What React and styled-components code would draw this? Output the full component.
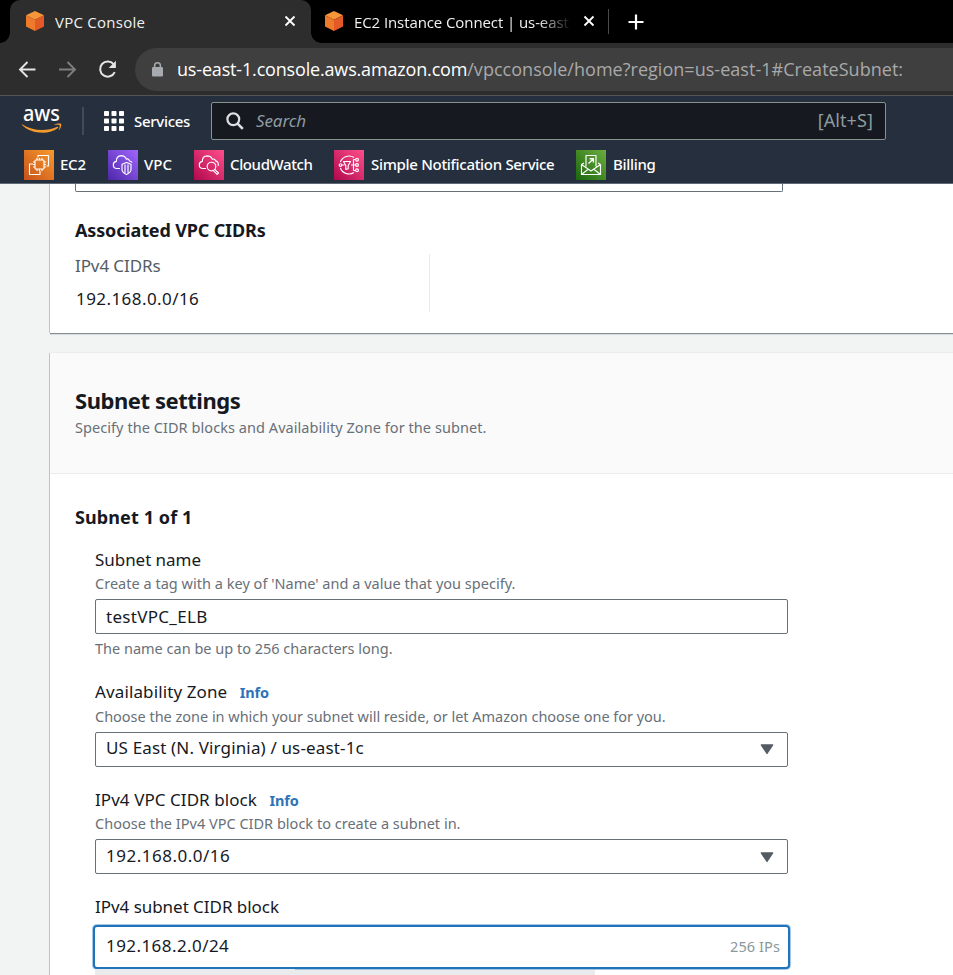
import React from 'react';
import styled, { createGlobalStyle, css } from 'styled-components';

const GlobalStyle = createGlobalStyle`
  * { box-sizing: border-box; }
  html, body { margin: 0; height: 100%; overflow: hidden; }
  body {
    font-family: "Noto Sans", "Open Sans", sans-serif;
    color: #16191f;
    background: #f2f3f3;
  }
  svg { display: block; flex: none; overflow: visible; }
`;

const Page = styled.div`
  width: 953px;
  height: 975px;
  overflow: hidden;
  display: flex;
  flex-direction: column;
`;

/* Browser chrome */
const TabStrip = styled.div`
  flex: none;
  height: 43px;
  background: #000;
  display: flex;
  padding-left: 10px;
`;

const Tab = styled.div`
  position: relative;
  height: 43px;
  width: ${(p) => (p.$active ? 301 : 299)}px;
  padding: 0 15px 1px ${(p) => (p.$active ? 15 : 13)}px;
  display: flex;
  align-items: center;
  color: #f1f1f1;
  ${(p) =>
    p.$active &&
    css`
      background: #2d2d2d;
      border-radius: 10px 10px 0 0;
      &::before,
      &::after {
        content: '';
        position: absolute;
        bottom: 0;
        width: 10px;
        height: 10px;
      }
      &::before {
        left: -10px;
        background: radial-gradient(circle at 0 0, transparent 9.5px, #2d2d2d 10px);
      }
      &::after {
        right: -10px;
        background: radial-gradient(circle at 100% 0, transparent 9.5px, #2d2d2d 10px);
      }
    `}
`;

const TabTitle = styled.span`
  flex: 1;
  margin: 2px 8px 0 10px;
  font: 400 15px/24px "Open Sans", sans-serif;
  letter-spacing: ${(p) => p.$spacing}px;
  white-space: nowrap;
  overflow: hidden;
  ${(p) =>
    p.$fade &&
    css`
      mask-image: linear-gradient(90deg, #000 184px, transparent 218px);
    `}
`;

const TabDivider = styled.div`
  width: 1px;
  height: 25px;
  margin: 9px 19px 0 -2px;
  background: #4a4a4a;
`;

const NewTab = styled.div`
  display: flex;
  align-items: center;
`;

const Toolbar = styled.div`
  flex: none;
  height: 53px;
  background: #2d2d2d;
  border-bottom: 1px solid #565453;
  display: flex;
  align-items: flex-start;
  padding: 5px 0 0 17px;
`;

const NavButton = styled.div`
  height: 41px;
  width: 40px;
  display: flex;
  align-items: center;
`;

const AddressBar = styled.div`
  flex: 1;
  height: 43px;
  margin-left: -2px;
  padding-left: 17px;
  border-radius: 22px 0 0 22px;
  background: #3f3f3f;
  display: flex;
  align-items: center;
  font: 400 18px/24px "Open Sans", sans-serif;
  white-space: nowrap;
`;

const Host = styled.span`
  margin: 0 0 2px 14px;
  color: #fff;
  letter-spacing: -0.17px;
`;

const Path = styled.span`
  margin-bottom: 2px;
  color: #a9a9a9;
  letter-spacing: 0.03px;
`;

/* AWS navigation */
const AwsHeader = styled.header`
  flex: none;
  height: 88px;
  background: #252f3e;
  border-bottom: 1px solid #5f6873;
`;

const MainNav = styled.div`
  height: 50px;
  padding: 6px 67px 0 22px;
  display: flex;
  align-items: flex-start;
`;

const NavDivider = styled.div`
  width: 2px;
  height: 28px;
  margin: 5px 20px 0 20px;
  background: #414b57;
`;

const Services = styled.div`
  width: 107px;
  height: 38px;
  display: flex;
  align-items: center;
  gap: 10px;
  color: #fff;
  font-size: 15px;
  font-weight: 500;
  letter-spacing: -0.3px;
`;

const SearchBox = styled.div`
  flex: 1;
  height: 38px;
  padding: 0 12px 0 14px;
  border: 1px solid #87938f;
  border-radius: 2px;
  background: #161920;
  display: flex;
  align-items: center;
  color: #8d9ba0;
  font-size: 17px;
  line-height: 24px;
`;

const Placeholder = styled.span`
  flex: 1;
  margin: 0 0 1px 12px;
  font-style: italic;
  letter-spacing: -0.1px;
`;

const Shortcut = styled.span`
  margin-bottom: 2px;
  font-size: 18px;
  letter-spacing: 0.1px;
`;

const Favorites = styled.div`
  display: flex;
  padding: 4px 0 0 24px;
`;

const Favorite = styled.div`
  width: ${(p) => p.$width}px;
  height: 30px;
  display: flex;
  align-items: center;
  gap: ${(p) => p.$gap}px;
  color: #fff;
  font-size: 15px;
  font-weight: 500;
  letter-spacing: ${(p) => p.$spacing}px;
  white-space: nowrap;
`;

const FavoriteName = styled.span`
  margin-bottom: 2px;
`;

const ServiceTile = styled.div`
  flex: none;
  width: 30px;
  height: 30px;
  display: flex;
  align-items: center;
  justify-content: center;
  background: linear-gradient(45deg, ${(p) => p.$from}, ${(p) => p.$to});
`;

/* Page content */
const Content = styled.main`
  flex: 1;
  min-height: 0;
  overflow: hidden;
  padding-left: 50px;
  display: flex;
  flex-direction: column;
  gap: 20px;
`;

const Card = styled.section`
  flex: none;
  height: ${(p) => p.$height}px;
  background: #fff;
  box-shadow: -1px 0 0 #bfc4c5, 0 1px 0 #858f95, 0 2px 0 #d5dadb, 0 -1px 0 #eaeded;
`;

const VpcBody = styled.div`
  padding-left: 25px;
`;

const CutOffSelect = styled.div`
  width: 708px;
  height: 8px;
  border: 1px solid #687078;
  border-top: 0;
  border-radius: 0 0 2px 2px;
`;

const SectionTitle = styled.h3`
  margin: ${(p) => p.$top}px 0 0;
  font-size: 18px;
  line-height: 24px;
  font-weight: 700;
  letter-spacing: ${(p) => p.$spacing}px;
`;

const CidrColumn = styled.div`
  width: 355px;
  height: 58px;
  margin-top: 12px;
  border-right: 1px solid #e6eaea;
  font-size: 17px;
  line-height: 22px;
`;

const CidrLabel = styled.div`
  color: #545b64;
  padding-top: 1px;
  letter-spacing: -0.1px;
`;

const CidrValue = styled.div`
  margin: 11px 0 0 1px;
  letter-spacing: 0.43px;
`;

const CardHeader = styled.div`
  height: 121px;
  padding: 32px 0 0 25px;
  background: #fafafa;
  border-bottom: 1px solid #eaeded;
`;

const CardTitle = styled.h2`
  margin: 0;
  font-size: 22px;
  line-height: 30px;
  font-weight: 700;
  letter-spacing: -0.45px;
`;

const Form = styled.div`
  padding: 31px 25px 0;
`;

const Fields = styled.div`
  width: 693px;
  margin: 19px 0 0 20px;
`;

const Field = styled.div`
  margin-top: ${(p) => p.$top}px;
`;

const LabelRow = styled.div`
  display: flex;
  align-items: baseline;
  gap: 12.5px;
  font-size: 17px;
  line-height: 24px;
  letter-spacing: ${(p) => p.$spacing}px;
`;

const InfoLink = styled.a`
  color: #2e73b8;
  font-size: 14.5px;
  font-weight: 700;
  letter-spacing: -0.15px;
`;

const Hint = styled.div`
  color: #687078;
  font-size: 14.5px;
  line-height: 20px;
  letter-spacing: ${(p) => p.$spacing}px;
  margin-top: ${(p) => p.$top}px;
  white-space: nowrap;
`;

const Control = styled.div`
  height: 35px;
  margin-top: ${(p) => p.$top}px;
  padding: 0 13px 0 10px;
  border: 1px solid #687078;
  border-radius: 2px;
  background: #fff;
  display: flex;
  align-items: center;
  justify-content: space-between;
  font-size: 17px;
  line-height: ${(p) => (p.$select ? p.$line : 34)}px;
  letter-spacing: ${(p) => p.$spacing}px;
  ${(p) =>
    p.$select &&
    css`
      align-items: flex-start;
      svg {
        margin-top: ${p.$arrow}px;
      }
    `}
`;

const FocusedControl = styled.div`
  height: 44px;
  width: 697px;
  margin: 6px -2px 0;
  padding: 0 8px 3px 11px;
  border: 2px solid #2074bb;
  border-radius: 4px;
  box-shadow: 0 0 0 1px #2074bb66;
  background: #fff;
  display: flex;
  align-items: center;
  justify-content: space-between;
  font-size: 17px;
  letter-spacing: 0.43px;
`;

const AddressCount = styled.span`
  color: #8a989b;
  font-size: 14.5px;
  letter-spacing: 0.1px;
`;

const RangeTrack = styled.div`
  width: 500px;
  height: 10px;
  display: flex;
`;

const TrackSegment = styled.div`
  width: ${(p) => p.$width}px;
  margin-top: ${(p) => p.$top}px;
  background: #e9ebed;
`;

const CubeIcon = () => (
  <svg width="20" height="22" viewBox="0 0 20 22">
    <path d="M10 1 19 5.3 10 9.8 1 5.3Z" fill="#f7953a" />
    <path d="M1 5.3 10 9.8V21L1 16.4Z" fill="#ee7a2b" />
    <path d="M19 5.3 10 9.8V21l9-4.6Z" fill="#e35a27" />
  </svg>
);

const CloseIcon = () => (
  <svg width="12" height="12" viewBox="0 0 12 12" stroke="#fff" strokeWidth="1.8">
    <path d="M1.5 1.5l9 9M10.5 1.5l-9 9" />
  </svg>
);

const ArrowIcon = ({ forward }) => (
  <svg width="20" height="20" viewBox="0 0 20 20" fill="none" strokeWidth="1.9" stroke={forward ? '#7e7e7e' : '#e4e4e4'}>
    {forward ? <path d="M2 10.5h15.5M10.5 3l7.5 7.5-7.5 7.5" /> : <path d="M18.5 10.5H3M10.5 3 3 10.5l7.5 7.5" />}
  </svg>
);

const ReloadIcon = () => (
  <svg width="22" height="22" viewBox="0 0 22 22">
    <path d="M17.7 14.1A7.6 7.6 0 1 1 16.6 6.2" fill="none" stroke="#e4e4e4" strokeWidth="2" />
    <path d="M18.9 2.7v7.2h-7.2Z" fill="#e4e4e4" />
  </svg>
);

const LockIcon = () => (
  <svg width="11" height="15" viewBox="0 0 11 15">
    <rect x="0" y="5" width="11" height="9.5" rx="1.2" fill="#a7abaf" />
    <path d="M2.6 6V3.6a2.9 2.9 0 0 1 5.8 0V6" fill="none" stroke="#a7abaf" strokeWidth="1.5" />
  </svg>
);

const AwsLogo = () => (
  <svg width="40" height="32" viewBox="0 0 40 32">
    <text x="1" y="19" fontFamily="Noto Sans, sans-serif" fontSize="22.5" fontWeight="500" fill="#fff" textLength="37" lengthAdjust="spacingAndGlyphs">
      aws
    </text>
    <path d="M0 22.3c10 6.6 24 7.8 35.2 2.5.8-.4 1.4.5.8 1.1C27.5 33 9 32.2 0 22.9Z" fill="#f79a2c" />
    <path d="M31.8 23c2.4-1.6 6.8-1.9 7.3-1.1.6.9-.4 4.8-2.5 6.6.8-2.4 1.5-4.5.9-5.2-.7-.7-3.5-.4-5.7-.3Z" fill="#f79a2c" />
  </svg>
);

const GridIcon = () => (
  <svg width="20" height="20" viewBox="0 0 20 20" fill="#fff">
    {[0, 7.5, 15].map((y) =>
      [0, 7.5, 15].map((x) => <rect key={`${x}-${y}`} x={x} y={y} width="5" height="5" rx="0.8" />)
    )}
  </svg>
);

const SearchIcon = () => (
  <svg width="18" height="18" viewBox="0 0 18 18" fill="none" stroke="#dce0e2" strokeWidth="2.2">
    <circle cx="7.3" cy="7.3" r="5.9" />
    <path d="m11.6 11.6 5.2 5.2" strokeWidth="2.6" />
  </svg>
);

const TileSvg = ({ children }) => (
  <svg width="30" height="30" viewBox="0 0 30 30" fill="none" stroke="#fff" strokeWidth="1.15" strokeLinejoin="round">
    {children}
  </svg>
);

const Ec2Icon = () => (
  <TileSvg>
    <rect x="11" y="10" width="9" height="9" rx="1" />
    <path d="M13 10V8M15.5 10V8M18 10V8M13 19v2M15.5 19v2M18 19v2M11 12H9M11 14.5H9M11 17H9M20 12h2M20 14.5h2M20 17h2" />
    <path d="M14 7.5V5.5h10.5V16h-2M9 14H5.5v10.5H16V21" />
  </TileSvg>
);

const VpcIcon = () => (
  <TileSvg>
    <path d="M12 18.5H9c-2.3 0-3.7-1.5-3.7-3.5 0-2 1.2-3.3 3-3.6C8.3 8 10.3 5.7 13.3 5.6c2.5 0 4.2 1.2 5 3.5 1.5-.6 2.9.3 3.2 1.9 1.5.4 2.3.9 2.5 1.7" />
    <path d="m18.5 12.5 4.5 1.7v5.300c0 2.200-2.100 3.900-4.500 5-2.400-1.100-4.500-2.800-4.500-5v-5.300ZM17 14.500v8.300M20 14.500v8.300" />
  </TileSvg>
);

const CloudWatchIcon = () => (
  <TileSvg>
    <path d="M12 18.5H9c-2.3 0-3.7-1.5-3.7-3.5 0-2 1.2-3.3 3-3.6C8.3 8 10.3 6 13.3 5.9c2.5 0 4.2 1.2 5 3.3 1.5-.6 2.9.1 3.2 1.7 2.2.3 3.2 2.3 2.7 5" />
    <circle cx="17.5" cy="16.5" r="4.3" />
    <path d="m20.7 19.4 3.8 3.6-1.4 1.4-3.8-3.7" />
  </TileSvg>
);

const SnsIcon = () => (
  <TileSvg>
    <path d="M20 7.5A9.2 9.2 0 0 0 6.4 12M6.4 18A9.2 9.2 0 0 0 20 22.5" />
    <circle cx="6.5" cy="15" r="1.3" />
    <path d="M9.5 11.5h7l-2.3 4v3.2l-2.4.8v-4ZM8 15h2.5M17 15h5M19.5 9.5v11M19.5 9.5h2M19.5 20.5h2" />
    <circle cx="23" cy="9.7" r="1.4" />
    <circle cx="23" cy="15" r="1.4" />
    <circle cx="23" cy="20.3" r="1.4" />
  </TileSvg>
);

const BillingIcon = () => (
  <TileSvg>
    <path d="M10 16.5V5.5h10v11M5.5 14.5v10h19v-10M8 13l-2.5 1.5L15 21l9.500-6.500L22 13M5.500 24.500l7-5.500M24.500 24.500l-7-5.500" />
    <path d="M12.5 13.5 17.2 9M13.7 8.7h3.7v3.7" strokeWidth="1.4" />
  </TileSvg>
);

const CaretIcon = () => (
  <svg width="14" height="11" viewBox="0 0 14 11">
    <path d="M1.3 1h11.4L7 9.5Z" fill="#545b64" stroke="#545b64" strokeWidth="1.3" strokeLinejoin="round" />
  </svg>
);

const favorites = [
  { name: 'EC2', width: 84, gap: 6, spacing: -0.25, from: '#c8511b', to: '#f79a2c', Icon: Ec2Icon },
  { name: 'VPC', width: 86, gap: 6, spacing: 0.1, from: '#4d27a8', to: '#a166ff', Icon: VpcIcon },
  { name: 'CloudWatch', width: 140, gap: 6, spacing: -0.38, from: '#b0084d', to: '#ff4f8b', Icon: CloudWatchIcon },
  { name: 'Simple Notification Service', width: 242, gap: 7, spacing: -0.31, from: '#b0084d', to: '#ff4f8b', Icon: SnsIcon },
  { name: 'Billing', width: 90, gap: 7, spacing: -0.3, from: '#1b660f', to: '#6cae3e', Icon: BillingIcon },
];

export default function App() {
  return (
    <Page>
      <GlobalStyle />
      <TabStrip>
        <Tab $active>
          <CubeIcon />
          <TabTitle $spacing={0.25}>VPC Console</TabTitle>
          <CloseIcon />
        </Tab>
        <Tab>
          <CubeIcon />
          <TabTitle $fade $spacing={-0.09}>EC2 Instance Connect | us-east</TabTitle>
          <CloseIcon />
        </Tab>
        <TabDivider />
        <NewTab>
          <svg width="16" height="16" viewBox="0 0 16 16" stroke="#fff" strokeWidth="2.2">
            <path d="M8 .5v15M.5 8h15" />
          </svg>
        </NewTab>
      </TabStrip>
      <Toolbar>
        <NavButton><ArrowIcon /></NavButton>
        <NavButton><ArrowIcon forward /></NavButton>
        <NavButton><ReloadIcon /></NavButton>
        <AddressBar>
          <LockIcon />
          <Host>us-east-1.console.aws.amazon.com</Host>
          <Path>/vpcconsole/home?region=us-east-1#CreateSubnet:</Path>
        </AddressBar>
      </Toolbar>

      <AwsHeader>
        <MainNav>
          <AwsLogo />
          <NavDivider />
          <Services>
            <GridIcon />
            Services
          </Services>
          <SearchBox>
            <SearchIcon />
            <Placeholder>Search</Placeholder>
            <Shortcut>[Alt+S]</Shortcut>
          </SearchBox>
        </MainNav>
        <Favorites>
          {favorites.map(({ name, width, gap, spacing, from, to, Icon }) => (
            <Favorite key={name} $width={width} $gap={gap} $spacing={spacing}>
              <ServiceTile $from={from} $to={to}>
                <Icon />
              </ServiceTile>
              <FavoriteName>{name}</FavoriteName>
            </Favorite>
          ))}
        </Favorites>
      </AwsHeader>

      <Content>
        <Card $height={149}>
          <VpcBody>
            <CutOffSelect />
            <SectionTitle $top={26} $spacing={-0.15}>Associated VPC CIDRs</SectionTitle>
            <CidrColumn>
              <CidrLabel>IPv4 CIDRs</CidrLabel>
              <CidrValue>192.168.0.0/16</CidrValue>
            </CidrColumn>
          </VpcBody>
        </Card>

        <Card $height={650}>
          <CardHeader>
            <CardTitle>Subnet settings</CardTitle>
            <Hint $top={2} $spacing={0.06}>Specify the CIDR blocks and Availability Zone for the subnet.</Hint>
          </CardHeader>
          <Form>
            <SectionTitle $top={0} $spacing={0.1}>Subnet 1 of 1</SectionTitle>
            <Fields>
              <Field>
                <LabelRow $spacing={-0.05}>Subnet name</LabelRow>
                <Hint $top={1} $spacing={0.02}>Create a tag with a key of 'Name' and a value that you specify.</Hint>
                <Control $top={6} $spacing={0.3}>testVPC_ELB</Control>
                <Hint $top={4}>The name can be up to 256 characters long.</Hint>
              </Field>
              <Field $top={22}>
                <LabelRow $spacing={0.12}>
                  Availability Zone <InfoLink>Info</InfoLink>
                </LabelRow>
                <Hint $top={2} $spacing={-0.02}>
                  Choose the zone in which your subnet will reside, or let Amazon choose one for you.
                </Hint>
                <Control $select $line={30} $arrow={11} $top={6} $spacing={0.15}>
                  US East (N. Virginia) / us-east-1c
                  <CaretIcon />
                </Control>
              </Field>
              <Field $top={21}>
                <LabelRow $spacing={0.06}>
                  IPv4 VPC CIDR block <InfoLink>Info</InfoLink>
                </LabelRow>
                <Hint $top={1} $spacing={0.01}>Choose the IPv4 VPC CIDR block to create a subnet in.</Hint>
                <Control $select $line={32} $arrow={12} $top={6} $spacing={0.5}>
                  192.168.0.0/16
                  <CaretIcon />
                </Control>
              </Field>
              <Field $top={21}>
                <LabelRow $spacing={-0.04}>IPv4 subnet CIDR block</LabelRow>
                <FocusedControl>
                  192.168.2.0/24
                  <AddressCount>256 IPs</AddressCount>
                </FocusedControl>
                <RangeTrack>
                  <TrackSegment $width={200} $top={0} />
                  <TrackSegment $width={300} $top={1} />
                </RangeTrack>
              </Field>
            </Fields>
          </Form>
        </Card>
      </Content>
    </Page>
  );
}
